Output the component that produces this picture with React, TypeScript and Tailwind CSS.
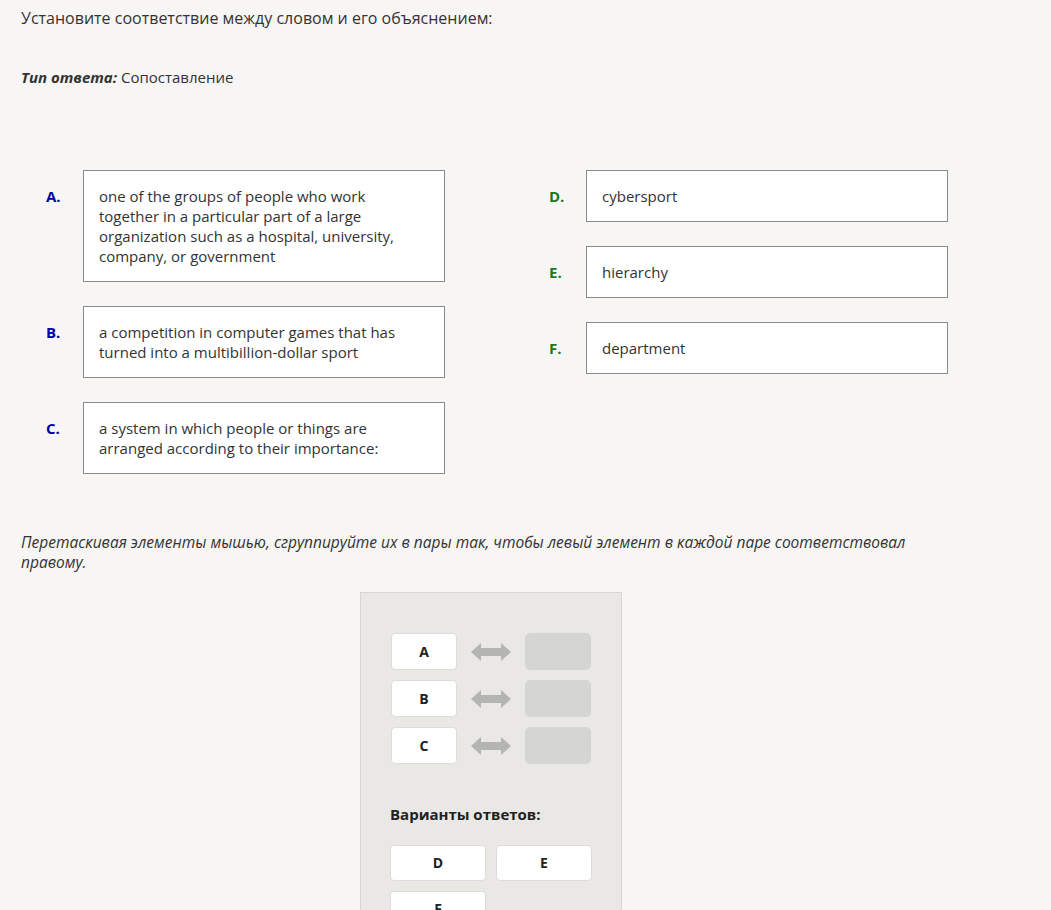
const font = { fontFamily: '"Open Sans", "Noto Sans", sans-serif' };

const defs = [
  { key: "A", text: "one of the groups of people who work together in a particular part of a large organization such as a hospital, university, company, or government" },
  { key: "B", text: "a competition in computer games that has turned into a multibillion-dollar sport" },
  { key: "C", text: "a system in which people or things are arranged according to their importance:" },
];

const words = [
  { key: "D", text: "cybersport" },
  { key: "E", text: "hierarchy" },
  { key: "F", text: "department" },
];

function Arrow() {
  return (
    <svg width="40" height="20" viewBox="0 0 40 20">
      <polygon points="0,10 10,1 10,6 30,6 30,1 40,10 30,19 30,14 10,14 10,19" fill="#b4b4b2" />
    </svg>
  );
}

export default function App() {
  return (
    <div className="min-h-[910px] bg-[#f7f6f5] text-[#333] overflow-hidden" style={font}>
      <div className="px-[21px] pt-[6px]">
        <p className="text-[16px] leading-[24px] text-[#333]">Установите соответствие между словом и его объяснением:</p>
        <p className="mt-[35px] text-[15px] leading-[24px]">
          <span className="font-bold italic">Тип ответа:</span> Сопоставление
        </p>

        <div className="mt-[81px] flex">
          <div className="w-[528px] flex flex-col gap-[24px]">
            {defs.map((d) => (
              <div key={d.key} className="flex">
                <div className="w-[62px] pl-[25px] pt-[16px] text-[15px] leading-[20px] font-bold text-[#0000a8]">{d.key}.</div>
                <div className="w-[362px] border border-[#8a8a8a] bg-white px-[15px] py-[15px] text-[15px] leading-[20px] text-[#333]">
                  {d.text}
                </div>
              </div>
            ))}
          </div>
          <div className="flex flex-col gap-[24px]">
            {words.map((w) => (
              <div key={w.key} className="flex">
                <div className="w-[37px] pt-[16px] text-[15px] leading-[20px] font-bold text-[#1c7a1c]">{w.key}.</div>
                <div className="w-[362px] border border-[#8a8a8a] bg-white px-[15px] py-[15px] text-[15px] leading-[20px] text-[#333]">
                  {w.text}
                </div>
              </div>
            ))}
          </div>
        </div>

        <p className="mt-[58px] w-[910px] text-[15.5px] leading-[20px] italic text-[#333]">
          Перетаскивая элементы мышью, сгруппируйте их в пары так, чтобы левый элемент в каждой паре соответствовал правому.
        </p>

        <div className="mt-[20px] ml-[339px] w-[262px] h-[400px] border border-[#d6d5d2] bg-[#e9e8e4] pt-[40px] px-[29px]">
          <div className="flex flex-col gap-[10px] pl-[1px]">
            {["A", "B", "C"].map((k) => (
              <div key={k} className="flex items-center">
                <div className="w-[66px] h-[37px] rounded-[4px] border border-[#dddcd8] bg-white flex items-center justify-center text-[14px] font-bold text-[#222]">
                  {k}
                </div>
                <div className="w-[68px] flex justify-center">
                  <Arrow />
                </div>
                <div className="w-[66px] h-[37px] rounded-[5px] bg-[#d5d5d3]" />
              </div>
            ))}
          </div>
          <p className="mt-[39px] text-[15px] font-bold text-[#222]">Варианты ответов:</p>
          <div className="mt-[19px] grid grid-cols-2 gap-x-[10px] gap-y-[10px] w-[202px]">
            {["D", "E", "F"].map((k) => (
              <div key={k} className="h-[36px] rounded-[4px] border border-[#dddcd8] bg-white flex items-center justify-center text-[14px] font-bold text-[#222]">
                {k}
              </div>
            ))}
          </div>
        </div>
      </div>
    </div>
  );
}
